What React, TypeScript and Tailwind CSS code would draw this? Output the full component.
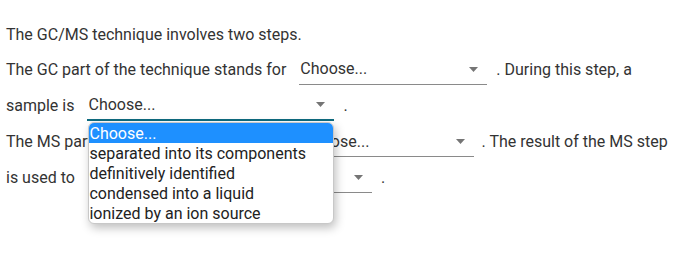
import React from "react";

function Caret() {
  return (
    <svg width="9" height="5" viewBox="0 0 9 5" className="shrink-0">
      <path d="M0 0 L9 0 L4.5 5 Z" fill="#757575" />
    </svg>
  );
}

function FakeSelect({ width, focused = false, children }: { width: string; focused?: boolean; children?: React.ReactNode }) {
  return (
    <span className={`relative inline-flex items-center justify-between h-[30px] ${width} pl-[1px] pr-[9px] ${focused ? "border-b-2 border-[#0f6b7f]" : "border-b border-[#8a8a8a]"}`}>
      <span>Choose...</span>
      <Caret />
      {children}
    </span>
  );
}

export default function App() {
  const options = [
    "Choose...",
    "separated into its components",
    "definitively identified",
    "condensed into a liquid",
    "ionized by an ion source",
  ];
  return (
    <div className="min-h-[256px] pt-[17px] pl-[6px] font-['Roboto',sans-serif] text-[16px] text-[#333] bg-white">
      <div className="flex items-center h-[35px]">The GC/MS technique involves two steps.</div>
      <div className="flex items-center h-[35px]">
        <span>The GC part of the technique stands for</span>
        <span className="ml-[13px] flex"><FakeSelect width="w-[188px]" /></span>
        <span className="ml-[9px]">. During this step, a</span>
      </div>
      <div className="flex items-center h-[37px]">
        <span>sample is</span>
        <span className="ml-[13px] flex">
          <FakeSelect width="w-[247px]" focused>
            <div className="absolute left-[1px] top-[31px] w-[246px] bg-white border border-[#c8c8c8] rounded-[6px] shadow-[2px_4px_10px_rgba(0,0,0,0.25)] overflow-hidden z-10 text-[#222]">
              {options.map((o, i) => (
                <div key={o} className={`h-[20px] leading-[20px] pt-[1px] ${i === 0 ? "bg-[#1e90ff] text-white" : ""}`}>{o}</div>
              ))}
            </div>
          </FakeSelect>
        </span>
        <span className="ml-[9px]">.</span>
      </div>
      <div className="flex items-center h-[36px]">
        <span>The MS part of the technique stands for</span>
        <span className="ml-[13px] flex"><FakeSelect width="w-[172px]" /></span>
        <span className="ml-[8px]">. The result of the MS step</span>
      </div>
      <div className="flex items-center h-[36px]">
        <span>is used to</span>
        <span className="ml-[13px] flex"><FakeSelect width="w-[284px]" /></span>
        <span className="ml-[9px]">.</span>
      </div>
    </div>
  );
}
